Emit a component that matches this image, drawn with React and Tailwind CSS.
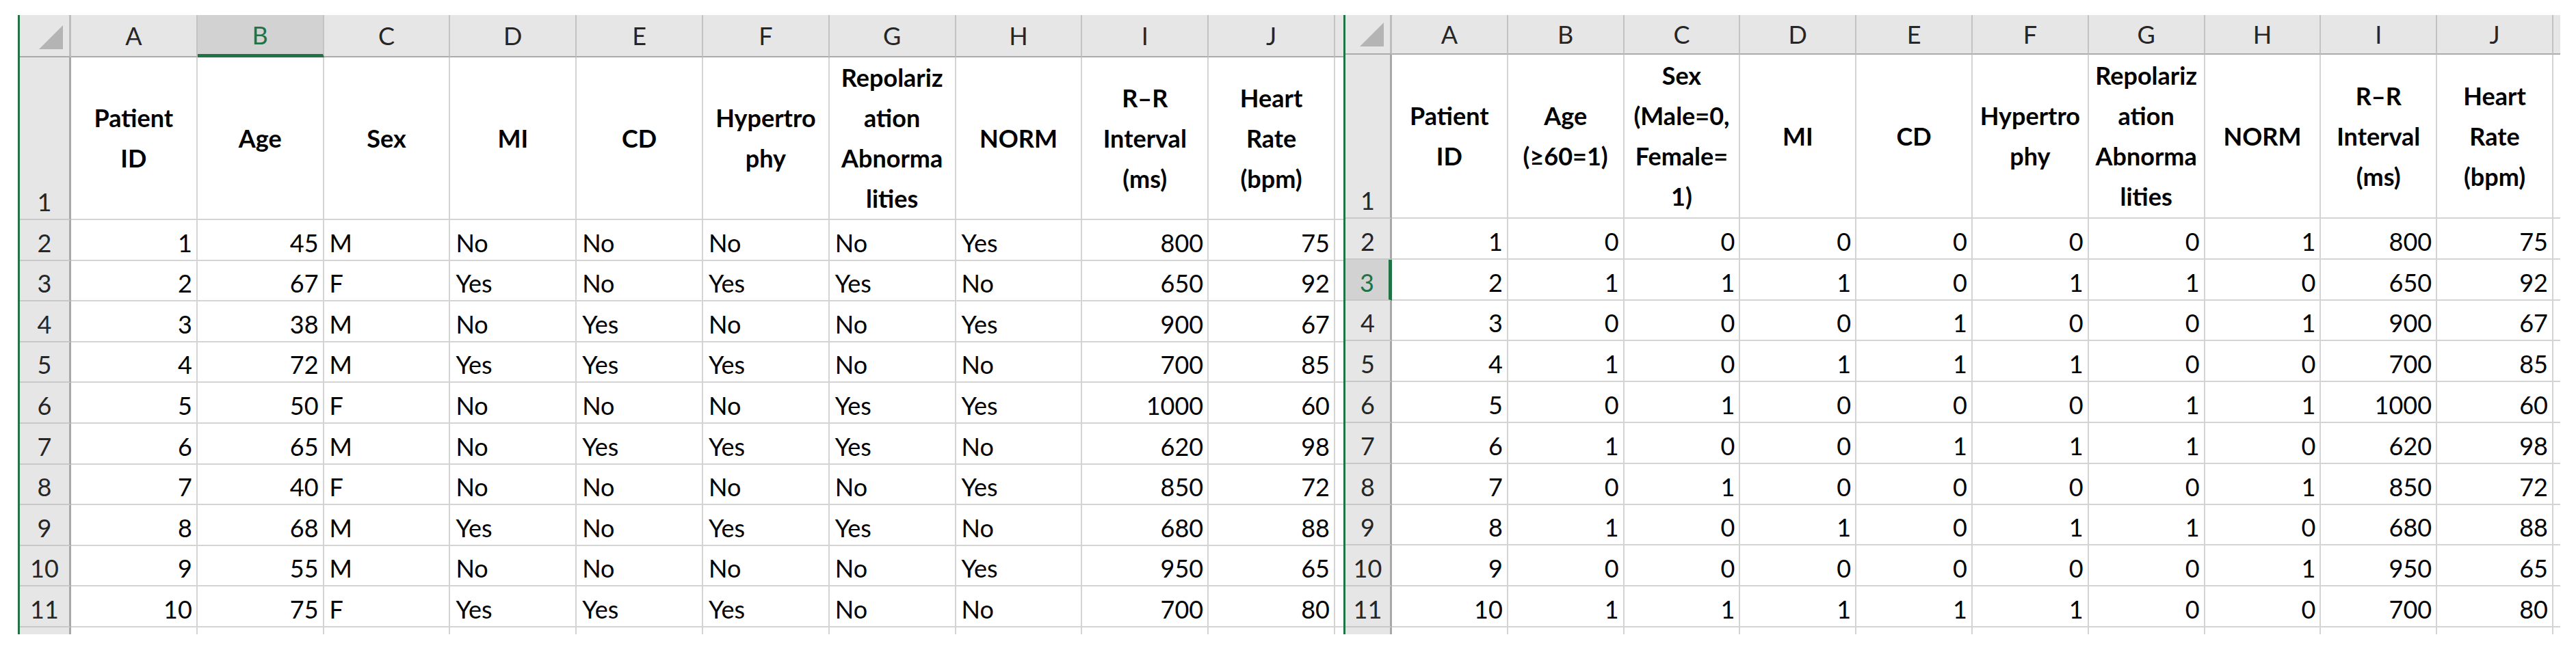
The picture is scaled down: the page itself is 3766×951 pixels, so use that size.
// Two Excel sheets side by side: raw ECG table and its encoded version
const LETTERS = ['A', 'B', 'C', 'D', 'E', 'F', 'G', 'H', 'I', 'J'];

const rawHeaders = [
  ['Patient', 'ID'],
  ['Age'],
  ['Sex'],
  ['MI'],
  ['CD'],
  ['Hypertro', 'phy'],
  ['Repolariz', 'ation', 'Abnorma', 'lities'],
  ['NORM'],
  ['R–R', 'Interval', '(ms)'],
  ['Heart', 'Rate', '(bpm)'],
];

const rawRows = [
  [1, 45, 'M', 'No', 'No', 'No', 'No', 'Yes', 800, 75],
  [2, 67, 'F', 'Yes', 'No', 'Yes', 'Yes', 'No', 650, 92],
  [3, 38, 'M', 'No', 'Yes', 'No', 'No', 'Yes', 900, 67],
  [4, 72, 'M', 'Yes', 'Yes', 'Yes', 'No', 'No', 700, 85],
  [5, 50, 'F', 'No', 'No', 'No', 'Yes', 'Yes', 1000, 60],
  [6, 65, 'M', 'No', 'Yes', 'Yes', 'Yes', 'No', 620, 98],
  [7, 40, 'F', 'No', 'No', 'No', 'No', 'Yes', 850, 72],
  [8, 68, 'M', 'Yes', 'No', 'Yes', 'Yes', 'No', 680, 88],
  [9, 55, 'M', 'No', 'No', 'No', 'No', 'Yes', 950, 65],
  [10, 75, 'F', 'Yes', 'Yes', 'Yes', 'No', 'No', 700, 80],
];

const codedHeaders = [
  ['Patient', 'ID'],
  ['Age', '(≥60=1)'],
  ['Sex', '(Male=0,', 'Female=', '1)'],
  ['MI'],
  ['CD'],
  ['Hypertro', 'phy'],
  ['Repolariz', 'ation', 'Abnorma', 'lities'],
  ['NORM'],
  ['R–R', 'Interval', '(ms)'],
  ['Heart', 'Rate', '(bpm)'],
];

const codedRows = [
  [1, 0, 0, 0, 0, 0, 0, 1, 800, 75],
  [2, 1, 1, 1, 0, 1, 1, 0, 650, 92],
  [3, 0, 0, 0, 1, 0, 0, 1, 900, 67],
  [4, 1, 0, 1, 1, 1, 0, 0, 700, 85],
  [5, 0, 1, 0, 0, 0, 1, 1, 1000, 60],
  [6, 1, 0, 0, 1, 1, 1, 0, 620, 98],
  [7, 0, 1, 0, 0, 0, 0, 1, 850, 72],
  [8, 1, 0, 1, 0, 1, 1, 0, 680, 88],
  [9, 0, 0, 0, 0, 0, 0, 1, 950, 65],
  [10, 1, 1, 1, 1, 1, 0, 0, 700, 80],
];

function Corner({ rowHeadW }) {
  return (
    <div className={`${rowHeadW} h-full shrink-0 bg-[#e6e6e6] border-r-[3px] border-r-[#bdbdbd] border-b-2 border-b-[#ababab] flex items-end justify-end pr-[9px] pb-[10px]`}>
      <svg width="35" height="35" viewBox="0 0 35 35">
        <polygon points="35,0 35,35 0,35" fill="#b4b4b4" />
      </svg>
    </div>
  );
}

function Sheet({ headers, rows, rowHeadW, colW, tailW, headH, row1H, rowH, selCol, selRow }) {
  return (
    <div className="flex flex-col shrink-0 border-l-[3px] border-[#217346] h-[906px] overflow-hidden">
      {/* column letters */}
      <div className={`flex ${headH} shrink-0`}>
        <Corner rowHeadW={rowHeadW} />
        {LETTERS.map((l, i) => (
          <div
            key={l}
            className={`${colW} shrink-0 h-full flex items-center justify-center border-r-2 border-r-[#c3c3c3] ${
              i === selCol
                ? 'bg-[#d2d2d2] text-[#217346] border-b-[5px] border-b-[#217346]'
                : 'bg-[#e6e6e6] text-[#262626] border-b-2 border-b-[#ababab]'
            }`}
          >
            {l}
          </div>
        ))}
        <div className={`${tailW} shrink-0 h-full bg-[#e6e6e6] border-b-2 border-b-[#ababab]`} />
      </div>

      {/* header row 1 */}
      <div className={`flex ${row1H} shrink-0`}>
        <div className={`${rowHeadW} shrink-0 h-full bg-[#e6e6e6] border-r-[3px] border-r-[#a8a8a8] border-b-2 border-b-[#c8c8c8] flex items-end justify-center pb-[5px] leading-[40px] text-[#262626]`}>
          1
        </div>
        {headers.map((lines, i) => (
          <div
            key={i}
            className={`${colW} shrink-0 h-full border-r-2 border-b-2 border-[#d4d4d4] flex items-center justify-center font-bold text-center leading-[59px] whitespace-nowrap`}
          >
            <div>
              {lines.map((t) => (
                <div key={t}>{t}</div>
              ))}
            </div>
          </div>
        ))}
        <div className={`${tailW} shrink-0 h-full border-b-2 border-[#d4d4d4]`} />
      </div>

      {/* data rows */}
      {rows.map((r, ri) => {
        const sel = ri + 2 === selRow;
        return (
          <div key={ri} className={`flex ${rowH} shrink-0`}>
            <div
              className={`${rowHeadW} shrink-0 h-full border-b-2 border-b-[#c8c8c8] flex items-end justify-center pb-[5px] leading-[40px] ${
                sel
                  ? 'bg-[#d2d2d2] text-[#217346] border-r-[5px] border-r-[#217346]'
                  : 'bg-[#e6e6e6] text-[#262626] border-r-[3px] border-r-[#a8a8a8]'
              }`}
            >
              {ri + 2}
            </div>
            {r.map((v, ci) => (
              <div
                key={ci}
                className={`${colW} shrink-0 h-full border-r-2 border-b-2 border-[#d4d4d4] flex items-end pb-[5px] leading-[40px] ${
                  typeof v === 'number' ? 'justify-end pr-[6px]' : 'justify-start pl-[8px]'
                }`}
              >
                {v}
              </div>
            ))}
            <div className={`${tailW} shrink-0 h-full border-b-2 border-[#d4d4d4]`} />
          </div>
        );
      })}

      {/* clipped row 12 */}
      <div className="flex h-[10px] shrink-0">
        <div className={`${rowHeadW} shrink-0 h-full bg-[#e6e6e6] border-r-[3px] border-r-[#a8a8a8]`} />
        {LETTERS.map((l) => (
          <div key={l} className={`${colW} shrink-0 h-full border-r-2 border-[#d4d4d4]`} />
        ))}
        <div className={`${tailW} shrink-0 h-full`} />
      </div>
    </div>
  );
}

export default function App() {
  return (
    <div className="w-[3766px] h-[951px] bg-white overflow-hidden font-['Lato','Liberation_Sans',sans-serif] text-[36px] text-black">
      <div className="flex pt-[22px] pl-[26px]">
        <Sheet
          headers={rawHeaders}
          rows={rawRows}
          rowHeadW="w-[75px]"
          colW="w-[184.8px]"
          tailW="w-[12px]"
          headH="h-[62px]"
          row1H="h-[238px]"
          rowH="h-[59.6px]"
          selCol={1}
          selRow={-1}
        />
        <Sheet
          headers={codedHeaders}
          rows={codedRows}
          rowHeadW="w-[68px]"
          colW="w-[169.8px]"
          tailW="w-[10px]"
          headH="h-[58px]"
          row1H="h-[240px]"
          rowH="h-[59.8px]"
          selCol={-1}
          selRow={3}
        />
      </div>
    </div>
  );
}
